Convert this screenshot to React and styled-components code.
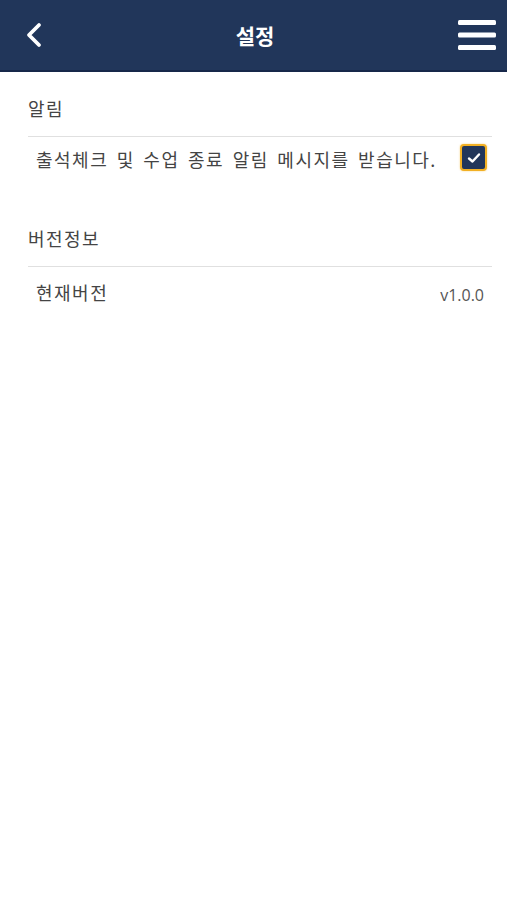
import styled, { createGlobalStyle } from "styled-components"

const GlobalStyle = createGlobalStyle`
  html, body {
    margin: 0;
    padding: 0;
    background: #fff;
    font-family: "Noto Sans CJK KR", "Noto Sans", sans-serif;
  }
`

const Page = styled.div`
  width: 507px;
  min-height: 900px;
  background: #fff;
`

const Header = styled.header`
  height: 72px;
  background: #21365a;
  border-bottom: 2px solid #17284a;
  display: flex;
  align-items: center;
  justify-content: space-between;
  padding: 0 10px 0 25px;
  box-sizing: border-box;
`

const Title = styled.h1`
  margin: 0;
  color: #fff;
  font-size: 21px;
  font-weight: 700;
  flex: 1;
  text-align: center;
  padding-left: 10px;
`

const IconButton = styled.button`
  background: none;
  border: 0;
  padding: 0;
  display: flex;
  align-items: center;
  justify-content: center;
  width: ${p => p.w}px;
  height: 40px;
`

const Content = styled.main`
  padding: 23px 15px 0 28px;
`

const Section = styled.section`
  margin-bottom: 53px;
`

const SectionTitle = styled.div`
  font-size: 18px;
  letter-spacing: 1.4px;
  color: #444;
  line-height: 26px;
  padding-bottom: 15px;
  border-bottom: 1px solid #e0e0e0;
`

const Row = styled.div`
  display: flex;
  align-items: center;
  justify-content: space-between;
  padding: 9px 5px 0 8px;
  font-size: 18px;
  letter-spacing: 1.5px;
  word-spacing: 3px;
  color: #444;
  line-height: 26px;
`

const Version = styled.span`
  font-family: "Open Sans", sans-serif;
  font-size: 16px;
  letter-spacing: 0;
  word-spacing: 0;
  color: #555;
  margin: 6px 3px 0 0;
`

const Check = styled.span`
  width: 23px;
  height: 23px;
  border-radius: 4px;
  background: #22365a;
  border: 2px solid #f2b024;
  display: flex;
  align-items: center;
  justify-content: center;
  box-shadow: 0 0 2px rgba(242, 176, 36, 0.6);
  margin-top: -3px;
`

const App = () => (
  <Page>
    <GlobalStyle />
    <Header>
      <IconButton w={18}>
        <svg width="18" height="26" viewBox="0 0 18 26">
          <path d="M14 3 L4 13 L14 23" fill="none" stroke="#fff" strokeWidth="3.8" strokeLinecap="round" strokeLinejoin="round" />
        </svg>
      </IconButton>
      <Title>설정</Title>
      <IconButton w={40}>
        <svg width="38" height="32" viewBox="0 0 38 32">
          <rect x="0" y="1" width="38" height="5" rx="1.5" fill="#fff" />
          <rect x="0" y="13.5" width="38" height="5" rx="1.5" fill="#fff" />
          <rect x="0" y="26" width="38" height="5" rx="1.5" fill="#fff" />
        </svg>
      </IconButton>
    </Header>
    <Content>
      <Section>
        <SectionTitle>알림</SectionTitle>
        <Row>
          <span>출석체크 및 수업 종료 알림 메시지를 받습니다.</span>
          <Check>
            <svg width="14" height="12" viewBox="0 0 14 12">
              <path d="M2 6.5 L5.5 9.5 L12 2.5" fill="none" stroke="#fff" strokeWidth="2.4" strokeLinecap="round" strokeLinejoin="round" />
            </svg>
          </Check>
        </Row>
      </Section>
      <Section>
        <SectionTitle>버전정보</SectionTitle>
        <Row>
          <span>현재버전</span>
          <Version>v1.0.0</Version>
        </Row>
      </Section>
    </Content>
  </Page>
)

export default App
